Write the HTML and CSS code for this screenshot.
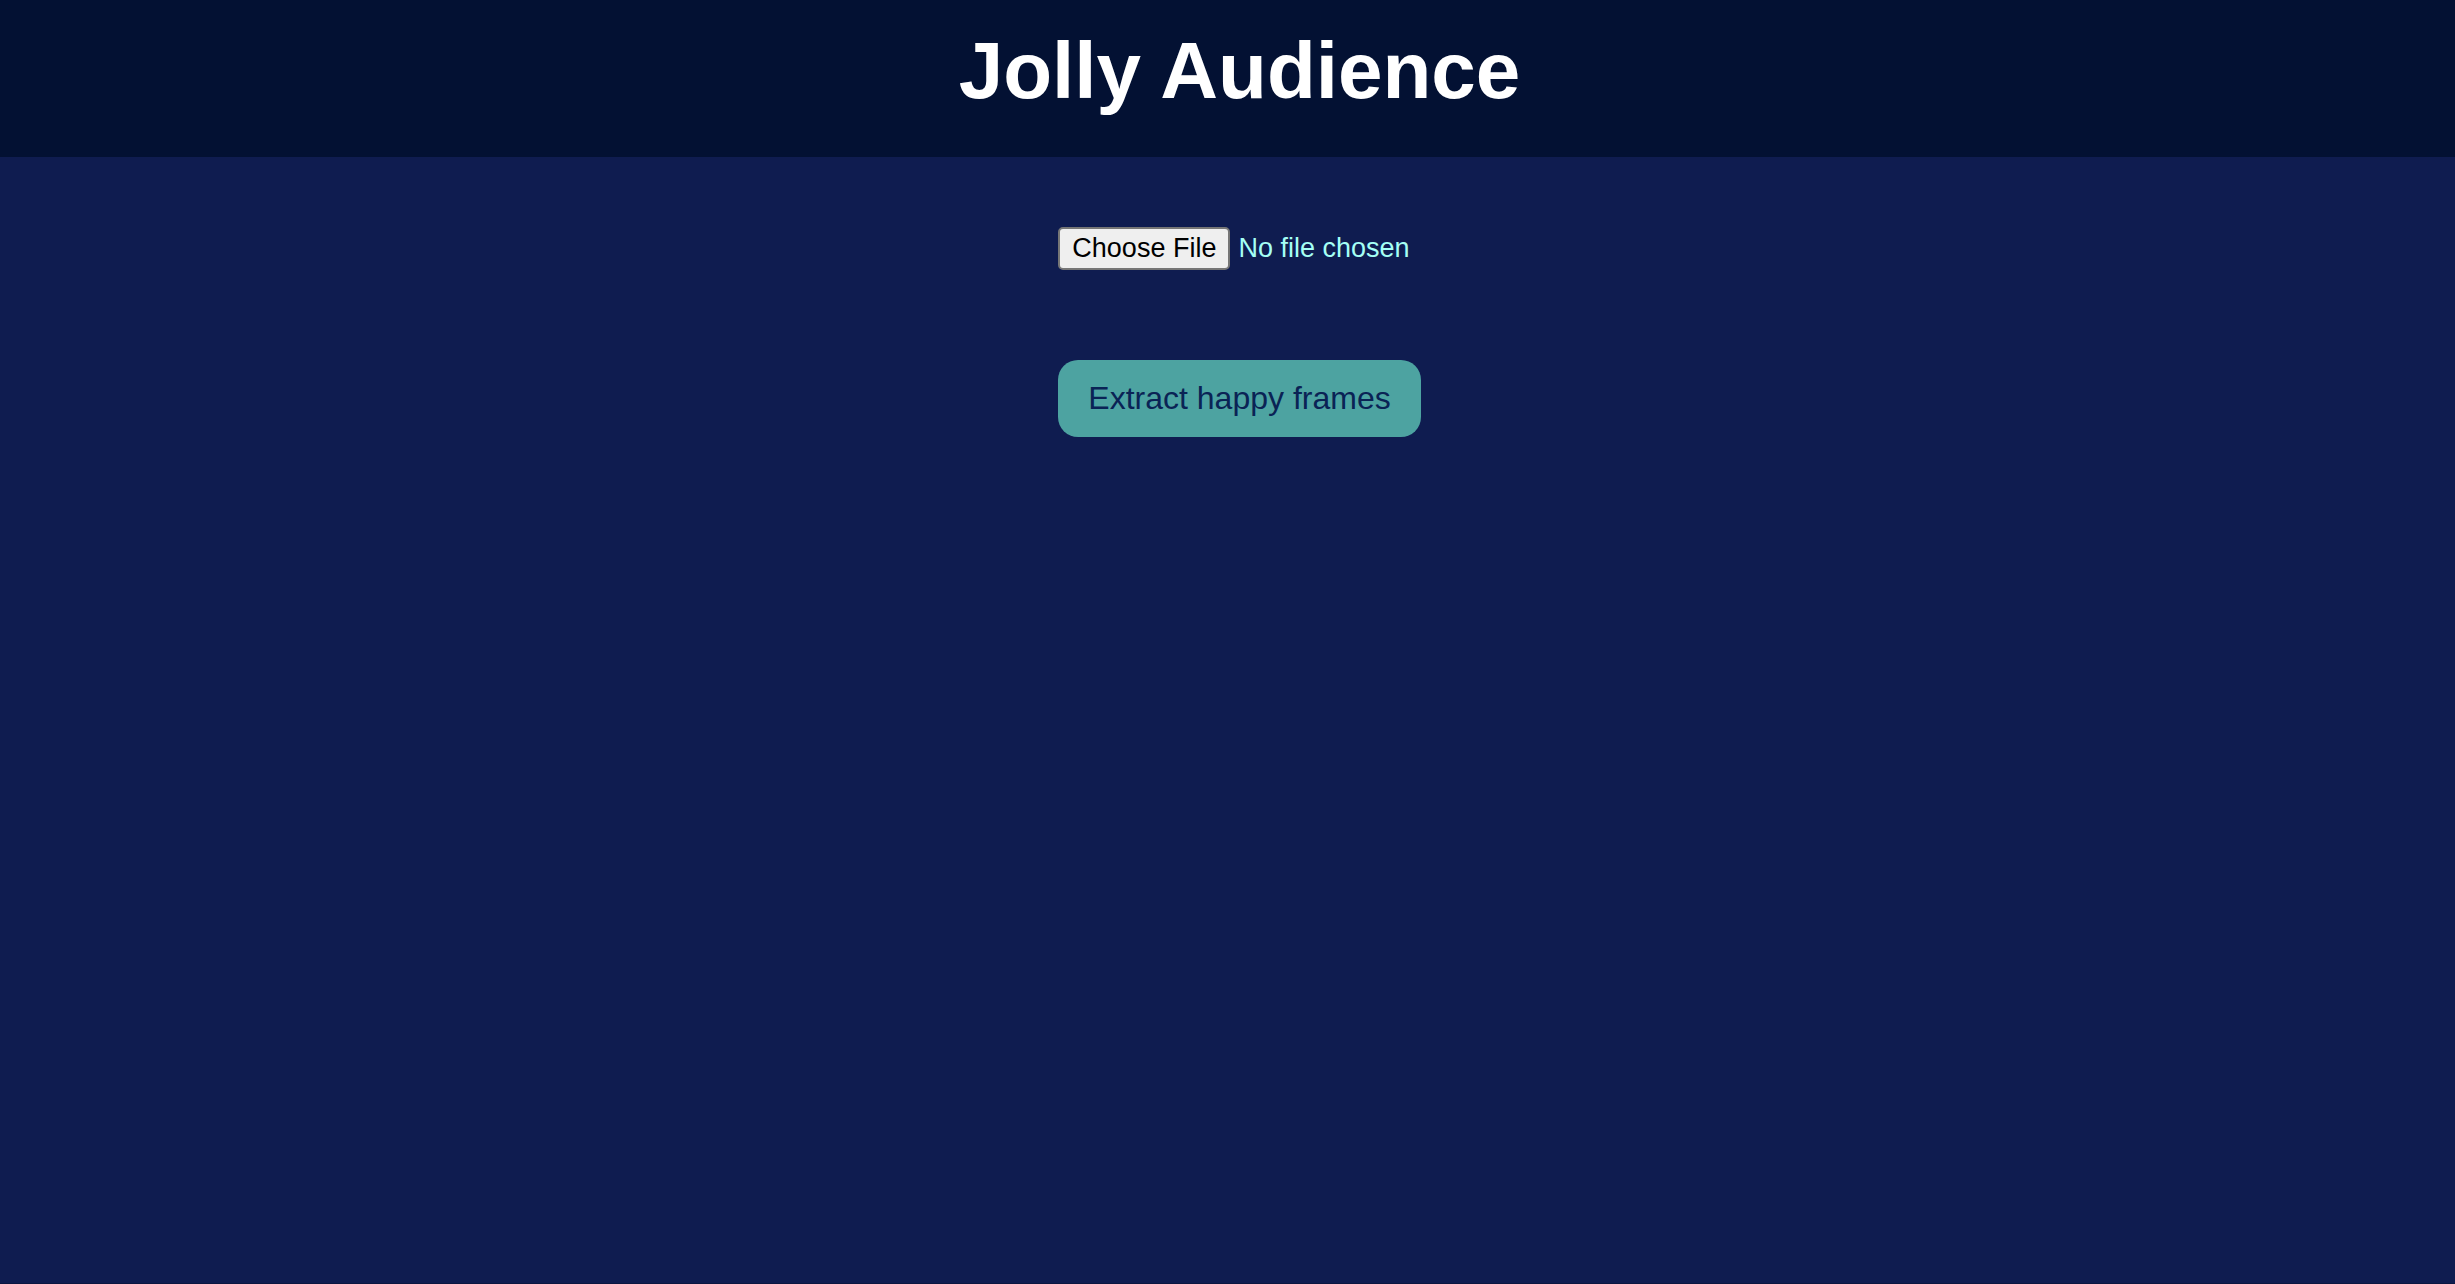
FILE: index.html
```html
<!DOCTYPE html>
<html lang="en">
<head>
  <meta charset="utf-8">
  <title>Jolly Audience</title>
  <link rel="stylesheet" href="styles.css">
</head>
<body>
  <header class="header">
    <h1 class="title">Jolly Audience</h1>
  </header>
  <main class="main">
    <form class="form">
      <input class="file" type="file" aria-label="Video file">
      <button class="extract" type="button">Extract happy frames</button>
    </form>
  </main>
</body>
</html>
```

FILE: styles.css
```css
* {
  box-sizing: border-box;
}

body {
  margin: 0;
  min-height: 100vh;
  display: flex;
  flex-direction: column;
  background: #0f1c50;
  font-family: "Liberation Sans", Arial, sans-serif;
}

.header {
  padding: 25px 0 40px 24px;
  background: #031133;
}

.title {
  margin: 0;
  color: #fff;
  font-size: 80px;
  line-height: 92px;
  text-align: center;
}

.main {
  flex: 1;
  display: flex;
  justify-content: center;
  align-items: flex-start;
  padding: 70px 0 0 24px;
  border-bottom: 1px solid #0a1640;
}

.form {
  display: grid;
  gap: 90px;
}

.file {
  width: 0;
  min-width: 100%;
  color: #a5fff5;
  font-family: inherit;
  font-size: 27px;
}

.file::file-selector-button {
  height: 43px;
  margin: 0 8px 0 0;
  padding: 0 12px;
  border: 2px solid #767676;
  border-radius: 5px;
  background: #efefef;
  color: #000;
  font: inherit;
}

.extract {
  padding: 20px 30px;
  border: 0;
  border-radius: 20px;
  background: #4da3a1;
  color: #0a2355;
  font-family: inherit;
  font-size: 32px;
  line-height: 37px;
}
```
